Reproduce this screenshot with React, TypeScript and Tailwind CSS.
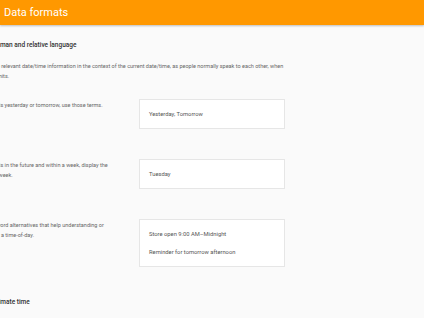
const rows = [
  {
    text: 'If the date is yesterday or tomorrow, use those terms.',
    examples: ['Yesterday, Tomorrow'],
  },
  {
    text: 'If the date is in the future and within a week, display the day of the week.',
    examples: ['Tuesday'],
  },
  {
    text: 'Consider word alternatives that help understanding or context for a time-of-day.',
    examples: ['Store open 9:00 AM–Midnight', 'Reminder for tomorrow afternoon'],
  },
];

export default function App() {
  return (
    <div className="w-[424px] h-[318px] overflow-hidden bg-[#fafafa] font-['Roboto',sans-serif]">
      {/* App bar */}
      <div className="h-[25px] bg-[#ff9800] flex items-center pl-[4px] shadow-[0_1px_2px_rgba(0,0,0,0.25)] relative">
        <span className="text-white text-[11px] leading-none">Data formats</span>
      </div>

      <div className="ml-[-27px] w-[500px]">
        <h2 className="ml-[7px] mt-[14px] text-[6.5px] leading-[12px] font-medium text-[#333]">
          Use human and relative language
        </h2>
        <p className="mt-[10px] w-[316px] text-[5.5px] leading-[10px] text-[#666]">
          Display the relevant date/time information in the context of the current date/time, as people normally speak to each other, when space permits.
        </p>

        <div className="mt-[18px] flex flex-col gap-[30px]">
          {rows.map((r) => (
            <div key={r.text} className="flex items-start">
              <p className="w-[138px] pt-[1px] text-[5.5px] leading-[10px] text-[#666]">{r.text}</p>
              <div className="ml-[28px] w-[146px] bg-white border border-[#e6e6e6] px-[9px] pt-[9px] pb-[9px] flex flex-col gap-[8px]">
                {r.examples.map((e) => (
                  <span key={e} className="text-[5.8px] leading-[10px] text-[#555]">{e}</span>
                ))}
              </div>
            </div>
          ))}
        </div>

        <h2 className="ml-[5px] mt-[29px] text-[6.5px] leading-[12px] font-medium text-[#333]">
          Approximate time
        </h2>
      </div>
    </div>
  );
}
